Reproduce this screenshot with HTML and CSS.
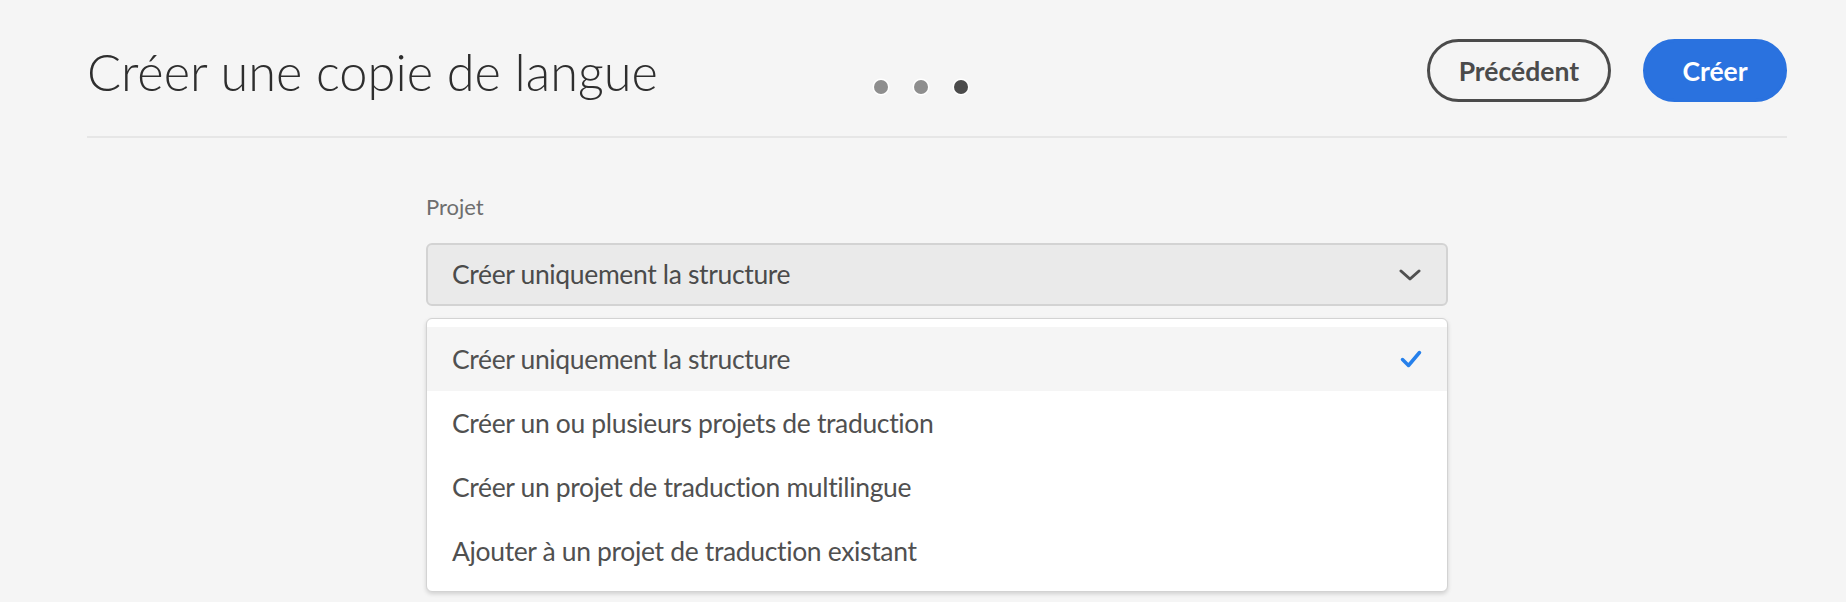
FILE: index.html
```html
<!DOCTYPE html>
<html lang="fr">
<head>
<meta charset="utf-8">
<title>Créer une copie de langue</title>
<link rel="stylesheet" href="styles.css">
</head>
<body>
<div class="page">
  <header class="header">
    <h1 class="title">Créer une copie de langue</h1>
    <div class="steps">
      <span class="dot"></span>
      <span class="dot"></span>
      <span class="dot dot-current"></span>
    </div>
    <div class="actions">
      <button class="btn btn-secondary">Précédent</button>
      <button class="btn btn-primary">Créer</button>
    </div>
  </header>
  <hr class="rule">
  <main class="form">
    <label class="label">Projet</label>
    <div class="select">
      <span class="select-value">Créer uniquement la structure</span>
      <svg class="chevron" width="22" height="12" viewBox="0 0 22 12"><path d="M2 2 L11 10 L20 2" fill="none" stroke="#505050" stroke-width="3" stroke-linecap="round" stroke-linejoin="round"/></svg>
    </div>
    <ul class="popover">
      <li class="item item-selected">
        <span>Créer uniquement la structure</span>
        <svg class="check" width="22" height="18" viewBox="0 0 22 18"><path d="M2.5 9.5 L8.5 15.5 L19.5 2.5" fill="none" stroke="#2680eb" stroke-width="3.5" stroke-linecap="round" stroke-linejoin="round"/></svg>
      </li>
      <li class="item"><span>Créer un ou plusieurs projets de traduction</span></li>
      <li class="item"><span>Créer un projet de traduction multilingue</span></li>
      <li class="item"><span>Ajouter à un projet de traduction existant</span></li>
    </ul>
  </main>
</div>
</body>
</html>
```
FILE: styles.css
```css
html, body {
  margin: 0;
  padding: 0;
  background: #f5f5f5;
}
body {
  font-family: Lato, "Open Sans", "Liberation Sans", sans-serif;
  color: #4b4b4b;
  height: 602px;
  overflow: hidden;
}
.page {
  padding: 39px 59px 0 87px;
}
.header {
  display: flex;
  align-items: center;
  height: 63px;
}
.title {
  flex: 1 1 0;
  margin: 0;
  padding-top: 2px;
  font-size: 50.5px;
  line-height: 63px;
  font-weight: 300;
  color: #2e2e2e;
  white-space: nowrap;
}
.steps {
  display: flex;
  gap: 26px;
  align-self: flex-start;
  margin-top: 41px;
  margin-right: 32px;
}
.dot {
  width: 14px;
  height: 14px;
  border-radius: 50%;
  background: #8e8e8e;
  box-shadow: 0 0 0 1.5px #fff;
}
.dot-current {
  background: #4b4b4b;
}
.actions {
  flex: 1 1 0;
  display: flex;
  justify-content: flex-end;
  gap: 32px;
}
.btn {
  height: 63px;
  min-width: 144px;
  padding: 0 29px;
  border-radius: 32px;
  font-family: Lato, "Open Sans", "Liberation Sans", sans-serif;
  font-weight: 700;
  font-size: 26.5px;
  cursor: pointer;
}
.btn-secondary {
  background: transparent;
  border: 3px solid #4b4b4b;
  color: #4b4b4b;
}
.btn-primary {
  background: #2a72df;
  border: 3px solid #2a72df;
  color: #fff;
}
.rule {
  margin: 34px 0 0;
  border: 0;
  height: 2px;
  background: #e6e6e6;
}
.form {
  width: 1022px;
  margin: 0 auto;
  padding-top: 54px;
  display: flex;
  flex-direction: column;
}
.label {
  font-size: 22px;
  line-height: 30px;
  color: #6e6e6e;
  margin-bottom: 21px;
}
.select {
  box-sizing: border-box;
  height: 63px;
  border: 2px solid #d3d3d3;
  border-radius: 6px;
  background: #eaeaea;
  display: flex;
  align-items: center;
  padding: 0 25px 0 24px;
}
.select-value {
  flex: 1;
  font-size: 26.5px;
  letter-spacing: -0.35px;
  line-height: 59px;
  color: #4b4b4b;
}
.chevron {
  display: block;
}
.popover {
  list-style: none;
  margin: 12px 0 0;
  padding: 8px 0;
  background: #fff;
  border: 1px solid #d3d3d3;
  border-radius: 6px;
  box-shadow: 0 2px 4px rgba(0, 0, 0, 0.15);
}
.item {
  height: 64px;
  display: flex;
  align-items: center;
  padding: 0 25px 0 25px;
  font-size: 26.5px;
  letter-spacing: -0.35px;
  line-height: 64px;
  color: #505050;
}
.item span {
  flex: 1;
}
.item-selected {
  background: #f5f5f5;
}
.check {
  display: block;
}
```
